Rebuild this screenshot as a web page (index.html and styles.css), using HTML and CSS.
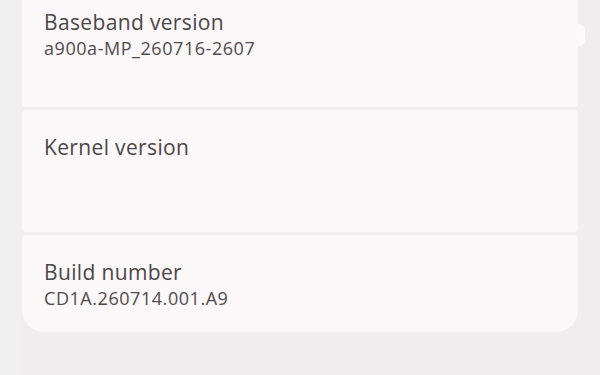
FILE: index.html
```html
<!DOCTYPE html>
<html>
<head>
<meta charset="utf-8">
<link rel="stylesheet" href="styles.css">
</head>
<body>
<div class="page">
  <div class="list">
    <div class="card card-first">
      <div class="title">Baseband version</div>
      <div class="value">a900a-MP_260716-2607</div>
    </div>
    <div class="card card-mid">
      <div class="title">Kernel version</div>
    </div>
    <div class="card card-last">
      <div class="title">Build number</div>
      <div class="value">CD1A.260714.001.A9</div>
    </div>
    <div class="nub"></div>
  </div>
</div>
</body>
</html>
```
FILE: styles.css
```css
html, body {
  margin: 0;
  padding: 0;
}
body {
  width: 600px;
  height: 375px;
  overflow: hidden;
  background: #f1ecee;
  font-family: "Open Sans", Roboto, sans-serif;
}
.page {
  height: 375px;
  background: linear-gradient(to right, #efefef 0, #efefef 22px, #f1ecee 22px);
}
.list {
  position: relative;
  width: 556px;
  margin-left: 22px;
  display: flex;
  flex-direction: column;
  gap: 3px;
}
.card {
  background: #fcf7f8;
  border-radius: 4px;
  padding-left: 22px;
  box-sizing: border-box;
}
.card-first {
  height: 107px;
  padding-top: 8px;
  border-radius: 0 0 4px 4px;
}
.card-mid {
  height: 122px;
  padding-top: 23px;
}
.card-last {
  height: 97px;
  padding-top: 23px;
  border-radius: 4px 4px 22px 22px;
}
.title {
  font-size: 21px;
  line-height: 28px;
  letter-spacing: 0.35px;
  color: #4b4647;
}
.value {
  font-size: 18px;
  line-height: 25px;
  letter-spacing: 0.55px;
  color: #4f4b4c;
}
.nub {
  position: absolute;
  right: -7px;
  top: 24px;
  width: 8px;
  height: 22px;
  background: #fcf9fa;
  border-radius: 0 6px 6px 0;
}
```
